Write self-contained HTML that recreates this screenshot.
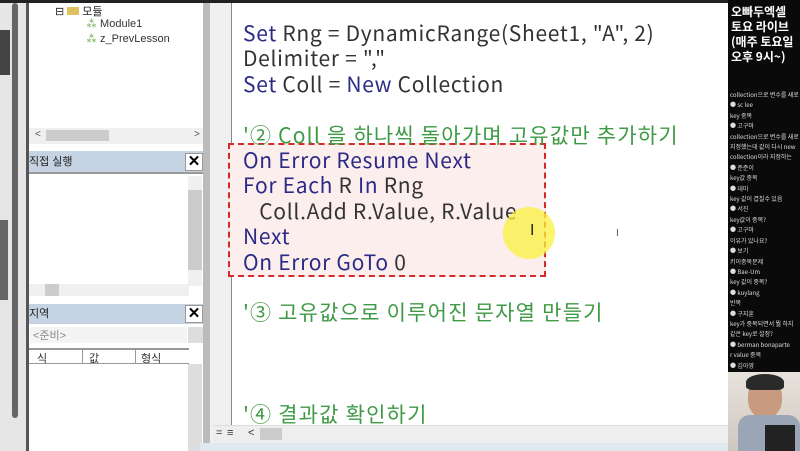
<!DOCTYPE html>
<html><head><meta charset="utf-8"><style>
*{margin:0;padding:0;box-sizing:border-box}
body{width:800px;height:451px;overflow:hidden;background:#fff;position:relative;font-family:"Liberation Sans","Noto Sans CJK KR",sans-serif}
.a{position:absolute}
.code{font-family:"Noto Sans CJK KR","Liberation Sans",sans-serif;font-size:21px;letter-spacing:0.7px;white-space:pre;color:#333;line-height:25.4px}
.k{color:#2b2b86}
.c{color:#3f9a45;letter-spacing:1.2px}
.ptxt{font-size:11px;color:#333}
.x{background:#fff;border:1px solid #999;font-weight:bold;font-size:15px;text-align:center;line-height:16px;width:18px;height:18px}
</style></head><body>
<div class="a" style="left:0;top:0;width:800px;height:3px;background:#222"></div>
<div class="a" style="left:0;top:3px;width:28px;height:448px;background:#e6e6e6"></div>
<div class="a" style="left:0;top:30px;width:10px;height:45px;background:#444"></div>
<div class="a" style="left:0;top:220px;width:8px;height:80px;background:#666"></div>
<div class="a" style="left:12px;top:3px;width:6px;height:415px;background:#666;border-radius:3px"></div>
<div class="a" style="left:26px;top:3px;width:3px;height:448px;background:#555"></div>
<div class="a" style="left:29px;top:3px;width:174px;height:448px;background:#fff"></div>
<div class="a" style="left:55px;top:3px;font-size:11px;color:#222">⊟<span style="display:inline-block;width:12px;height:8px;background:#e0c060;margin:0 3px"></span>모듈</div>
<div class="a ptxt" style="left:86px;top:15px"><span style="color:#593">⁂</span> Module1</div>
<div class="a ptxt" style="left:86px;top:30px"><span style="color:#593">⁂</span> z_PrevLesson</div>
<div class="a" style="left:29px;top:128px;width:174px;height:16px;background:#f0f0f0;font-size:10px;color:#555"><span class="a" style="left:6px;top:1px">&lt;</span><span class="a" style="left:17px;top:2px;width:63px;height:11px;background:#ccc"></span><span class="a" style="left:165px;top:1px">&gt;</span></div>
<div class="a" style="left:29px;top:151px;width:174px;height:21px;background:#c6d3e3;font-size:11px;color:#222;padding:2px 0 0 0">직접 실행</div>
<div class="a x" style="left:185px;top:153px">✕</div>
<div class="a" style="left:29px;top:172px;width:174px;height:2px;background:#999"></div>
<div class="a" style="left:188px;top:176px;width:14px;height:110px;background:#f0f0f0"><div style="margin-top:14px;height:80px;background:#ccc"></div></div>
<div class="a" style="left:29px;top:284px;width:160px;height:12px;background:#f0f0f0"><div class="a" style="left:16px;top:0;width:14px;height:12px;background:#ccc"></div></div>
<div class="a" style="left:29px;top:304px;width:174px;height:20px;background:#c6d3e3;font-size:11px;color:#222;padding-top:1px">지역</div>
<div class="a x" style="left:185px;top:305px">✕</div>
<div class="a" style="left:30px;top:327px;width:157px;height:16px;background:#f4f4f4;font-size:11px;color:#888;padding-left:3px">&lt;준비&gt;</div>
<div class="a" style="left:188px;top:327px;width:15px;height:16px;background:#ddd"></div>
<div class="a" style="left:29px;top:348px;width:160px;height:16px;border-top:2px solid #999;border-bottom:1px solid #999;font-size:11px;color:#333"><span class="a" style="left:8px">식</span><span class="a" style="left:53px;top:0;width:1px;height:14px;background:#999"></span><span class="a" style="left:60px">값</span><span class="a" style="left:106px;top:0;width:1px;height:14px;background:#999"></span><span class="a" style="left:112px">형식</span></div>
<div class="a" style="left:188px;top:364px;width:14px;height:87px;background:#ddd"></div>
<div class="a" style="left:203px;top:3px;width:10px;height:448px;background:#bbb"></div>
<div class="a" style="left:210px;top:3px;width:22px;height:448px;background:#f0f0f0;border-right:1px solid #888"></div>
<div class="a" style="left:228px;top:143px;width:318px;height:134px;background:#fdeeee;border:2px dashed #d42a2a"></div>
<div class="a code" style="left:243px;top:21px"><span class="k">Set</span> Rng = DynamicRange(Sheet1, "A", 2)
Delimiter = ","
<span class="k">Set</span> Coll = <span class="k">New</span> Collection

<span class="c">'② Coll 을 하나씩 돌아가며 고유값만 추가하기</span>
<span class="k">On Error Resume Next</span>
<span class="k">For Each</span> R <span class="k">In</span> Rng
   Coll.Add R.Value, R.Value
<span class="k">Next</span>
<span class="k">On Error GoTo</span> 0

<span class="c">'③ 고유값으로 이루어진 문자열 만들기</span>



<span class="c">'④ 결과값 확인하기</span></div>
<div class="a" style="left:503px;top:207px;width:52px;height:52px;border-radius:50%;background:rgba(250,240,60,.75)"></div>
<div class="a" style="left:530px;top:222px;font-size:16px;color:#222">I</div>
<div class="a" style="left:616px;top:228px;font-size:10px;color:#555">I</div>
<div class="a" style="left:213px;top:425px;width:515px;height:18px;background:#eee;border-top:1px solid #ddd;font-size:11px;color:#333"><span class="a" style="left:3px;top:1px">=</span><span class="a" style="left:14px;top:1px">≡</span><span class="a" style="left:35px;top:1px">&lt;</span><span class="a" style="left:47px;top:2px;width:22px;height:12px;background:#ccc"></span></div>
<div class="a" style="left:200px;top:443px;width:528px;height:8px;background:#e0e8f0"></div>
<div class="a" style="left:728px;top:0;width:72px;height:372px;background:#0a0a0a;overflow:hidden">
<div style="color:#fff;font-weight:bold;font-size:12px;line-height:15px;padding:4px 0 0 3px;font-family:'Noto Sans CJK KR',sans-serif">오빠두엑셀<br>토요 라이브<br>(매주 토요일<br>오후 9시~)</div>
<div style="color:#ddd;font-size:6px;line-height:10.4px;padding:26px 0 0 2px;white-space:pre;font-family:'Noto Sans CJK KR',sans-serif">collection으로 변수를 새로
● sc lee
key 중복
● 고구마
collection으로 변수를 새로
지정했는데 값이 다시 new
collection이라 지정하는
● 준준이
key값 중복
● 데미
key 값이 겹칠수 있음
● 서진
key값이 중복?
● 고구마
이유가 있나요?
● 보기
키이중복문제
● Bae-Um
key 값이 중복?
● kuylang
반복
● 구지훈
key가 중복되면서 뭘 하지
같은 key로 설정?
● berman bonaparte
r value 중복
● 김아영
이름이 두개가 있으면 오류
가 나는거였군요</div>
</div>
<div class="a" style="left:728px;top:372px;width:72px;height:79px;background:linear-gradient(#e8e2dc,#cfc8c0)"></div>
<div class="a" style="left:748px;top:378px;width:34px;height:40px;border-radius:45%;background:#c89a80"></div>
<div class="a" style="left:746px;top:374px;width:38px;height:16px;border-radius:50% 50% 20% 20%;background:#2a2a2a"></div>
<div class="a" style="left:738px;top:415px;width:62px;height:36px;background:#9aa6b5;border-radius:12px 12px 0 0"></div>
<div class="a" style="left:765px;top:425px;width:30px;height:26px;background:#222"></div>
</body></html>
